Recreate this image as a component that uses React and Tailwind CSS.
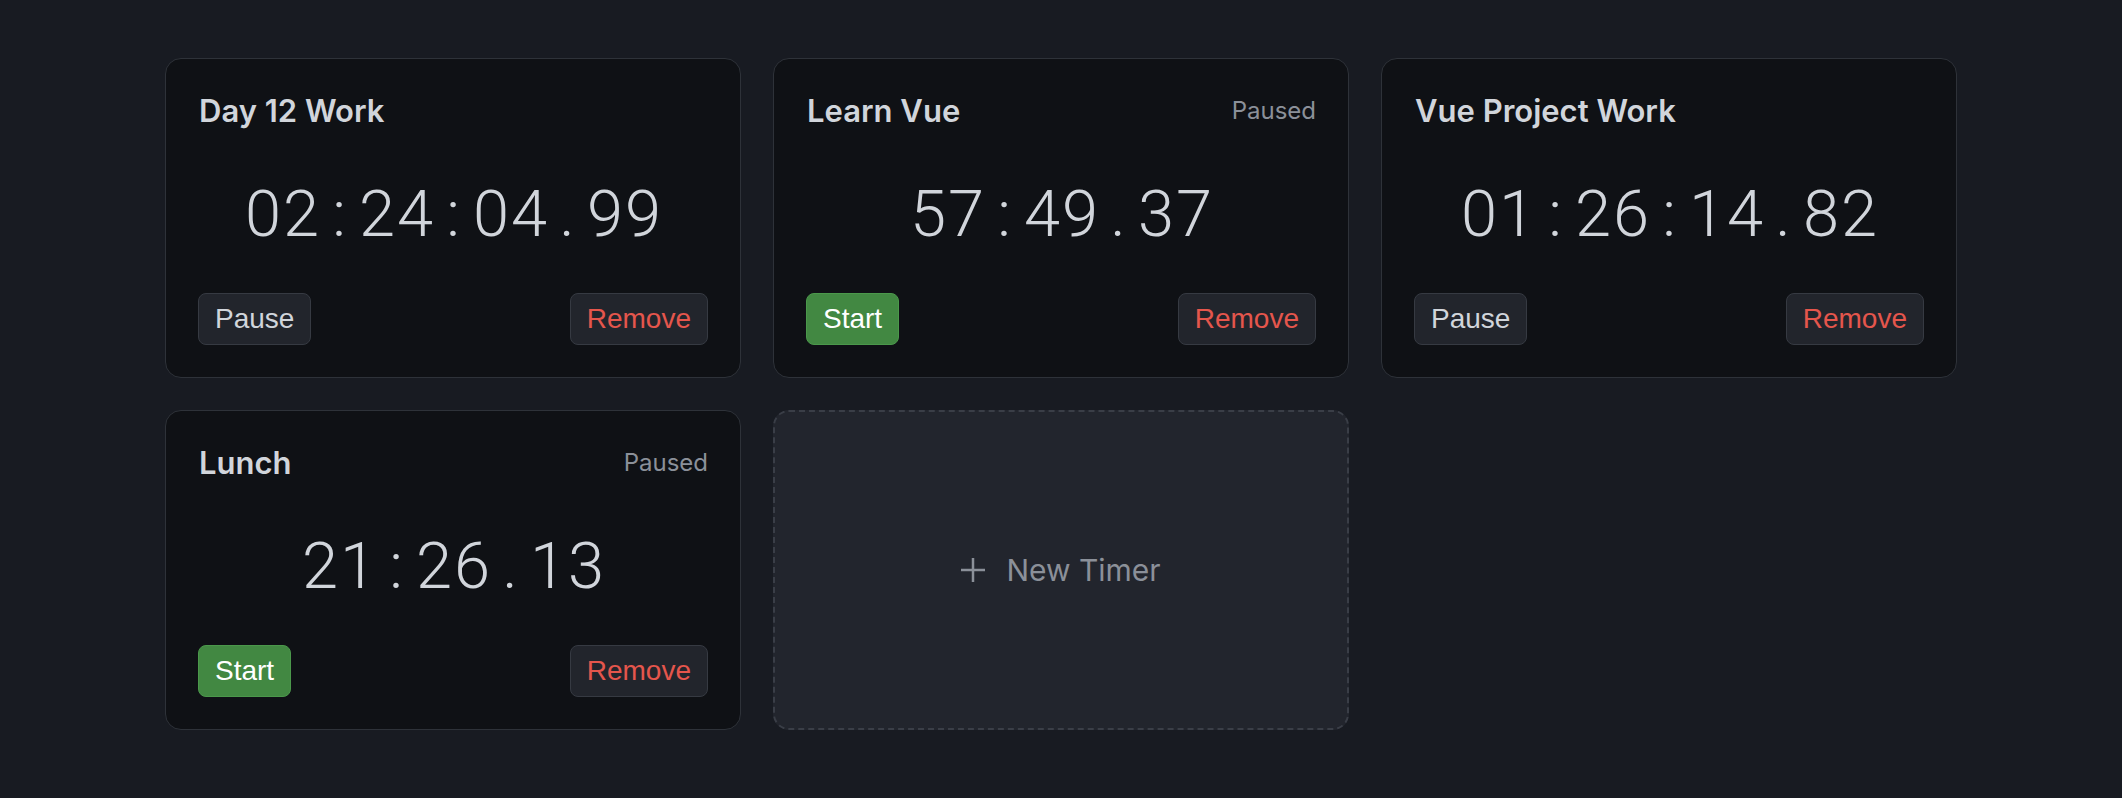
import React from "react";

const timers = [
  { name: "Day 12 Work", time: "02:24:04.99", paused: false },
  { name: "Learn Vue", time: "57:49.37", paused: true },
  { name: "Vue Project Work", time: "01:26:14.82", paused: false },
  { name: "Lunch", time: "21:26.13", paused: true },
];

function TimerCard({ t }) {
  return (
    <div className="flex h-[320px] flex-col rounded-[16px] border border-[#2e3239] bg-[#0f1115] p-[32px]">
      <div className="flex h-[40px] items-center justify-between">
        <span className="pl-[1px] font-['Inter',sans-serif] text-[31px] leading-[40px] font-semibold text-[#d1d5db]">
          {t.name}
        </span>
        {t.paused && (
          <span className="font-['Inter',sans-serif] text-[24px] leading-[32px] text-[#8b9099]">
            Paused
          </span>
        )}
      </div>
      <div className="flex flex-1 items-center justify-center pt-[3px]">
        <div className="flex font-['Roboto',sans-serif] text-[65px] leading-[64px] font-light text-[#d1d5db]">
          {t.time.split("").map((c, i) => (
            <span key={i} className="inline-block w-[38px] text-center">
              {c}
            </span>
          ))}
        </div>
      </div>
      <div className="flex items-center justify-between">
        {t.paused ? (
          <button className="h-[52px] rounded-[8px] border border-[#4b984b] bg-[#428842] px-[16px] font-['Liberation_Sans',Arial,sans-serif] text-[28px] leading-none text-white">
            Start
          </button>
        ) : (
          <button className="h-[52px] rounded-[8px] border border-[#363a42] bg-[#22252c] px-[16px] font-['Liberation_Sans',Arial,sans-serif] text-[28px] leading-none text-[#d1d5db]">
            Pause
          </button>
        )}
        <button className="h-[52px] rounded-[8px] border border-[#363a42] bg-[#22252c] px-[16px] font-['Liberation_Sans',Arial,sans-serif] text-[28px] leading-none text-[#e5564c]">
          Remove
        </button>
      </div>
    </div>
  );
}

export default function App() {
  return (
    <div className="min-h-screen bg-[#181b22] pt-[58px] pb-[58px]">
      <div className="mx-auto grid w-[1792px] grid-cols-3 gap-[32px]">
        {timers.map((t) => (
          <TimerCard key={t.name} t={t} />
        ))}
        <button className="flex h-[320px] items-center justify-center gap-[21px] rounded-[16px] border-2 border-dashed border-[#3a3e47] bg-[#22252d] text-[#8b9099]">
          <svg width="24" height="24" viewBox="0 0 24 24" fill="none" stroke="currentColor" strokeWidth="2.5">
            <line x1="12" y1="0" x2="12" y2="24" />
            <line x1="0" y1="12" x2="24" y2="12" />
          </svg>
          <span className="font-['Inter',sans-serif] text-[30px] leading-[40px]">New Timer</span>
        </button>
      </div>
    </div>
  );
}
